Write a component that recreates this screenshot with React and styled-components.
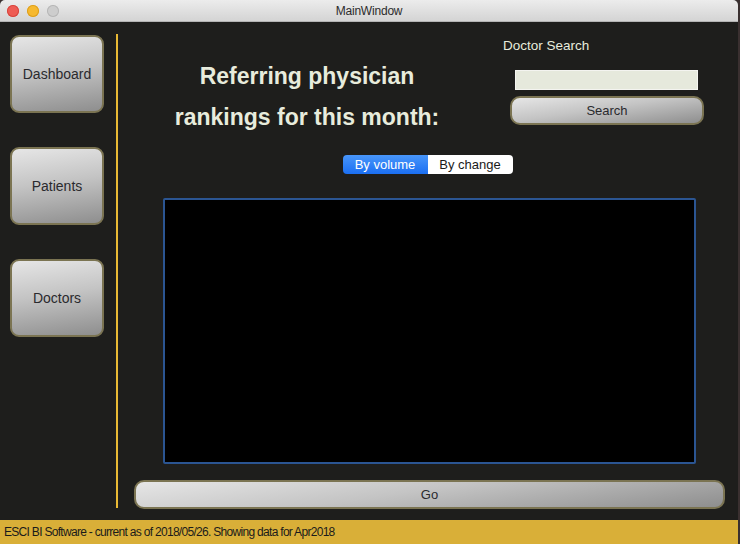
import React, { useState } from 'react';
import styled, { createGlobalStyle } from 'styled-components';

const GlobalStyle = createGlobalStyle`
  html, body {
    margin: 0;
    padding: 0;
    background: #3a3030;
  }
  body {
    font-family: "Liberation Sans", Arial, sans-serif;
  }
`;

const Window = styled.div`
  width: 738px;
  height: 544px;
  display: flex;
  flex-direction: column;
  background: #1e1e1c;
  border-top-right-radius: 5px;
  border-top-left-radius: 5px;
  overflow: hidden;
`;

const TitleBar = styled.div`
  height: 22px;
  flex-shrink: 0;
  position: relative;
  display: flex;
  align-items: center;
  justify-content: center;
  background: linear-gradient(#ececec, #d4d4d4);
  border-bottom: 1px solid #b4b4b4;
  box-sizing: border-box;
  font-size: 12px;
  color: #2c2c2c;
  letter-spacing: -0.2px;
`;

const Lights = styled.div`
  position: absolute;
  left: 7px;
  top: 5px;
  display: flex;
  gap: 8px;
`;

const Light = styled.span`
  width: 12px;
  height: 12px;
  border-radius: 50%;
  background: ${p => p.$color};
  box-shadow: inset 0 0 0 1px ${p => p.$edge};
`;

const Body = styled.div`
  flex: 1;
  display: flex;
  min-height: 0;
`;

const Sidebar = styled.div`
  width: 104px;
  padding: 13px 0 0 10px;
  box-sizing: border-box;
  display: flex;
  flex-direction: column;
  gap: 34px;
`;

const GlossButton = styled.button`
  box-sizing: border-box;
  width: ${p => p.$w || '100%'};
  height: ${p => p.$h || '29px'};
  border: 2px solid #7b7452;
  border-radius: ${p => p.$r || '10px'};
  background: linear-gradient(172deg, #e6e6e6 0%, #c4c4c4 45%, #8e8e8e 100%);
  color: #2a2a2e;
  font-family: "Liberation Sans", Arial, sans-serif;
  font-size: ${p => p.$fs || '13px'};
  padding: 0;
  cursor: pointer;
`;

const Divider = styled.div`
  width: 2px;
  margin: 12px 0 12px 12px;
  background: #e9b934;
`;

const Main = styled.div`
  flex: 1;
  display: flex;
  flex-direction: column;
  padding: 0 13px 11px 16px;
`;

const TopRow = styled.div`
  height: 133px;
  display: flex;
`;

const Heading = styled.h1`
  width: 346px;
  margin: 34px 0 0;
  font-size: 23px;
  line-height: 41px;
  font-weight: 700;
  text-align: center;
  color: #e8ecdc;
`;

const SearchCol = styled.div`
  margin-left: 23px;
  width: 203px;
  display: flex;
  flex-direction: column;
  padding-top: 16px;
`;

const Label = styled.div`
  height: 16px;
  line-height: 16px;
  font-size: 13.5px;
  color: #e8ecdc;
`;

const SearchInput = styled.input`
  box-sizing: border-box;
  margin: 16px 0 0 12px;
  width: 183px;
  height: 20px;
  border: 1px solid #f4f4f0;
  background: #e6e9dc;
  outline: none;
`;

const SearchButtonWrap = styled.div`
  margin: 6px 0 0 7px;
`;

const Segmented = styled.div`
  align-self: center;
  display: flex;
  height: 19px;
  margin-right: 4px;
  border-radius: 4px;
  overflow: hidden;
`;

const Segment = styled.button`
  width: 85px;
  border: none;
  padding: 0;
  font-family: "Liberation Sans", Arial, sans-serif;
  font-size: 13px;
  color: ${p => (p.$active ? '#ffffff' : '#1a1a1a')};
  background: ${p => (p.$active ? 'linear-gradient(#4896fa, #1b6ff2)' : '#ffffff')};
  cursor: pointer;
`;

const Panel = styled.div`
  align-self: center;
  box-sizing: border-box;
  width: 533px;
  height: 266px;
  margin-top: 24px;
  background: #000000;
  border: 2px solid #2b5592;
  border-radius: 2px;
`;

const GoWrap = styled.div`
  margin-top: 16px;
`;

const StatusBar = styled.div`
  height: 24px;
  flex-shrink: 0;
  background: #d9af38;
  display: flex;
  align-items: center;
  padding-left: 4px;
  font-size: 12px;
  color: #1b1b1b;
  letter-spacing: -0.7px;
`;

export default function App() {
  const [mode, setMode] = useState('volume');

  return (
    <>
      <GlobalStyle />
      <Window>
        <TitleBar>
          <Lights>
            <Light $color="#ee5c54" $edge="#d6463e" />
            <Light $color="#f6b92f" $edge="#dd9f1d" />
            <Light $color="#cdcdcd" $edge="#b6b6b6" />
          </Lights>
          MainWindow
        </TitleBar>
        <Body>
          <Sidebar>
            <GlossButton $h="78px" $r="9px" $fs="14px">Dashboard</GlossButton>
            <GlossButton $h="78px" $r="9px" $fs="14px">Patients</GlossButton>
            <GlossButton $h="78px" $r="9px" $fs="14px">Doctors</GlossButton>
          </Sidebar>
          <Divider />
          <Main>
            <TopRow>
              <Heading>
                Referring physician
                <br />
                rankings for this month:
              </Heading>
              <SearchCol>
                <Label>Doctor Search</Label>
                <SearchInput />
                <SearchButtonWrap>
                  <GlossButton $w="194px">Search</GlossButton>
                </SearchButtonWrap>
              </SearchCol>
            </TopRow>
            <Segmented>
              <Segment $active={mode === 'volume'} onClick={() => setMode('volume')}>
                By volume
              </Segment>
              <Segment $active={mode === 'change'} onClick={() => setMode('change')}>
                By change
              </Segment>
            </Segmented>
            <Panel />
            <GoWrap>
              <GlossButton>Go</GlossButton>
            </GoWrap>
          </Main>
        </Body>
        <StatusBar>ESCI BI Software - current as of 2018/05/26. Showing data for Apr2018</StatusBar>
      </Window>
    </>
  );
}
